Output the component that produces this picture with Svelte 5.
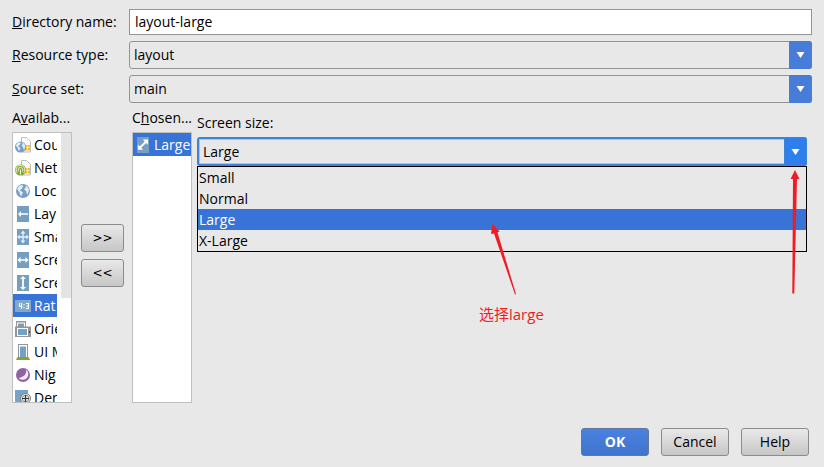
<script>
  const available = [
    { text: 'Cou', icon: 'country' },
    { text: 'Net', icon: 'network' },
    { text: 'Loc', icon: 'locale' },
    { text: 'Lay', icon: 'direction' },
    { text: 'Sma', icon: 'smallest' },
    { text: 'Scre', icon: 'width' },
    { text: 'Scre', icon: 'height' },
    { text: 'Rat', icon: 'ratio' },
    { text: 'Orie', icon: 'orientation' },
    { text: 'UI M', icon: 'mode' },
    { text: 'Nig', icon: 'night' },
    { text: 'Den', icon: 'density' }
  ];
  const sizes = ['Small', 'Normal', 'Large', 'X-Large'];
  let directory = $state('layout-large');
  let picked = $state('ratio');
  let size = $state('Large');
</script>

{#snippet globe(cx, cy, r)}
  <circle {cx} {cy} {r} fill="#769fc2" />
  <g transform="translate({cx} {cy}) scale({r / 7})" fill="#e4eef6">
    <path d="M-5.8 -2.6 L-3.4 -5.6 L-.4 -5.8 L.4 -4.6 L-1 -3.6 L-.6 -2.4 L-2.4 -1.6 L-2.8 0 L-1 .4 L0 1.8 L-1.2 3.4 L-1.6 5.4 L-3 3.6 L-3.4 1.4 L-5 -.4 Z" />
    <path d="M2.2 -5.6 L4.8 -4 L6 -1.4 L5.6 1 L4.4 3.4 L3.4 1.6 L3.2 -.2 L1.6 -.8 L1.4 -2.4 L3 -3.4 Z" />
  </g>
{/snippet}

{#snippet sim()}
  <path d="M6.5.5h5l4 4v10.500h-9z" fill="#fafafa" stroke="#bdbdbd" />
  <path d="M10 8h5v5.500h-5z" fill="#f3bd20" />
  <path d="M10 10.500h5M12.500 8v5.500" stroke="#fff3b8" stroke-width=".8" />
{/snippet}

{#snippet icon(name)}
  <svg class="icon" viewBox="0 0 16 16" aria-hidden="true">
    {#if name === 'country'}
      {@render sim()}
      {@render globe(5.5, 10, 5.5)}
    {:else if name === 'network'}
      {@render sim()}
      <circle cx="5.500" cy="10" r="5.500" fill="#83a629" />
      <path d="M5.500 9.500v5M3.800 11.600a2.400 2.400 0 1 1 3.400 0M2.400 13a4.400 4.400 0 1 1 6.200 0" fill="none" stroke="#f4f8e6" stroke-width="1" />
    {:else if name === 'locale'}
      {@render globe(8, 8, 7)}
    {:else if name === 'ratio'}
      <path d="M0 2h16v12H0z" fill="#7fa9cc" />
      <path d="M4.500 5v3.500h3M6.500 5v6M11 5.500h2.500v5H11M11.500 8h2" fill="none" stroke="#fff" stroke-width="1.100" />
      <path d="M8.500 6h1v1.200h-1zM8.500 9h1v1.200h-1z" fill="#fff" />
    {:else if name === 'orientation'}
      <path d="M1 0h10v6H1z" fill="#969696" />
      <path d="M2 1.500h8V6H2z" fill="#fff" />
      <path d="M3 2.500h6V6H3z" fill="#73a2c8" />
      <path d="M0 5.500h16V16H0z" fill="#969696" />
      <path d="M2 7h11v8H2z" fill="#fff" />
      <path d="M3 8h9v6H3z" fill="#73a2c8" />
      <path d="M14 10h1v2h-1z" fill="#444" />
    {:else if name === 'mode'}
      <path d="M3 0h10v14H3z" fill="#969696" />
      <path d="M4 1h8v12H4z" fill="#fff" />
      <path d="M5 2.500h6V13H5z" fill="#73a2c8" />
      <path d="M2.500 13h11l1.500 3H1z" fill="#83a629" />
    {:else if name === 'night'}
      <circle cx="8" cy="8" r="7" fill="#8e64a6" />
      <path d="M11.300 2.600C11.600 7.500 8.500 10.600 3.400 11C7 14.200 12.200 12.800 13.200 8.600C13.700 6.300 12.800 4 11.300 2.600z" fill="#f4edf8" />
    {:else if name === 'density'}
      <path d="M0 0h13v16H0z" fill="#76a3c8" />
      <circle cx="10.500" cy="8.500" r="5" fill="#eee" stroke="#777" />
      <circle cx="10.500" cy="8.500" r="3.300" fill="none" stroke="#666" stroke-width=".7" />
      <path d="M7 8.500h7M10.500 5v7" stroke="#333" stroke-width="1.200" />
    {:else}
      <path d="M2 0h12v16H2z" fill="#759fc2" />
      {#if name === 'direction'}
        <path d="M3 8l3-3v2.200H13v1.600H6V11z" fill="#fff" />
      {:else if name === 'width'}
        <path d="M2.500 8l3-3v2.200h5V5l3 3-3 3V8.800h-5V11z" fill="#fff" />
      {:else if name === 'height'}
        <path d="M8 1l3 3H8.900v8H11l-3 3-3-3h2.100V4H5z" fill="#fff" />
      {:else if name === 'smallest'}
        <path d="M8 1.500l2.500 3H8.700v2.800h2.600V5.500L13.800 8l-2.500 2.500V8.700H8.700v2.800h1.800L8 14.500l-2.500-3h1.800V8.700H4.700v1.800L2.200 8l2.500-2.500v1.800h2.600V4.500H5.500z" fill="#e6eff6" />
      {:else}
        <path d="M13 2.500v5.300l-1.900-1.900-4.900 4.900L8.100 12.700H2.900V7.500L4.800 9.400l4.900-4.900-2-2z" fill="#fff" />
      {/if}
    {/if}
  </svg>
{/snippet}

{#snippet arrow()}
  <span class="arrow" aria-hidden="true">
    <svg viewBox="0 0 9 6"><path d="M.5 0h8L4.500 6z" fill="#fff" /></svg>
  </span>
{/snippet}

<main class="dialog">
  <form class="fields" onsubmit={(e) => e.preventDefault()}>
    <label for="directory"><u>D</u>irectory name:</label>
    <input id="directory" type="text" bind:value={directory} />
    <label for="type"><u>R</u>esource type:</label>
    <div class="combo">
      <select id="type"><option>layout</option></select>
      {@render arrow()}
    </div>
    <label for="source"><u>S</u>ource set:</label>
    <div class="combo">
      <select id="source"><option>main</option></select>
      {@render arrow()}
    </div>
  </form>

  <section class="qualifiers">
    <div class="column">
      <span class="heading" id="available">A<u>v</u>ailab...</span>
      <ul class="list" role="listbox" aria-labelledby="available">
        {#each available as item}
          <li role="option" aria-selected={picked === item.icon} class:selected={picked === item.icon}>
            <button type="button" class="item" onclick={() => (picked = item.icon)}>
              {@render icon(item.icon)}<span>{item.text}</span>
            </button>
          </li>
        {/each}
        <li class="track" role="presentation"></li>
      </ul>
    </div>
    <div class="movers">
      <button type="button" class="push">&gt;&gt;</button>
      <button type="button" class="push">&lt;&lt;</button>
    </div>
    <div class="column">
      <span class="heading" id="chosen">C<u>h</u>osen...</span>
      <ul class="list chosen" role="listbox" aria-labelledby="chosen">
        <li class="selected" role="option" aria-selected="true">
          <button type="button" class="item">{@render icon('size')}<span>{size}</span></button>
        </li>
      </ul>
    </div>
    <div class="detail">
      <label for="size">Screen size:</label>
      <div class="combo focused">
        <select id="size" bind:value={size}>
          {#each sizes as s}<option>{s}</option>{/each}
        </select>
        {@render arrow()}
        <ul class="popup" role="listbox" aria-label="Screen size">
          {#each sizes as s}
            <li role="option" aria-selected={size === s} class:selected={size === s}>
              <button type="button" class="choice" onclick={() => (size = s)}>{s}</button>
            </li>
          {/each}
        </ul>
      </div>
    </div>
  </section>

  <footer>
    <button type="button" class="push primary">OK</button>
    <button type="button" class="push">Cancel</button>
    <button type="button" class="push">Help</button>
  </footer>

  <svg class="pointer pick" viewBox="0 0 28 74" aria-hidden="true">
    <path d="M2.500 0L9.500 7.500 7.500 8.500 26 70 25 70.500 4 9.500 1 10z" fill="#ee1c24" />
  </svg>
  <svg class="pointer open" viewBox="0 0 12 126" aria-hidden="true">
    <path d="M6 0L10.500 9H8L5.300 123.500H3.300L4 9H1.500z" fill="#ee1c24" />
  </svg>
  <span class="note">选择large</span>
</main>

<style>
  :global(body) { margin: 0; background: #e8e8e8; }
  .dialog {
    position: relative;
    min-height: 100vh;
    box-sizing: border-box;
    padding-top: 9px;
    background: #e8e8e8;
    color: #000;
    font: 14px/20px "Open Sans", "Noto Sans CJK SC", sans-serif;
  }
  .dialog * { box-sizing: border-box; }
  button, input, select { font: inherit; color: inherit; margin: 0; }
  ul { list-style: none; margin: 0; padding: 0; }
  u { text-underline-offset: 1px; text-decoration-thickness: 1px; text-decoration-skip-ink: none; }

  .fields {
    display: grid;
    grid-template-columns: 117px 1fr;
    row-gap: 6px;
    align-items: center;
    padding: 0 12px;
  }
  .fields input {
    width: 100%;
    height: 26px;
    padding: 0 5px 2px;
    border: 1px solid #949494;
    background: #fff;
    outline: none;
  }
  .combo { position: relative; height: 28px; }
  .combo select {
    display: block;
    width: 100%;
    height: 100%;
    padding: 0 28px 0 4px;
    appearance: none;
    border: 1px solid #949494;
    border-radius: 3px;
    background: #e8e8e8;
    outline: none;
  }
  .arrow {
    position: absolute;
    inset: 0 0 0 auto;
    width: 23px;
    display: flex;
    align-items: center;
    justify-content: center;
    background: #477cd8;
    border-radius: 0 3px 3px 0;
    pointer-events: none;
  }
  .arrow svg { width: 9px; height: 6px; }

  .qualifiers { display: flex; padding: 5px 17px 0 12px; }
  .column { width: 60px; }
  .heading { display: block; height: 24px; white-space: nowrap; }
  .list {
    position: relative;
    height: 271px;
    overflow: hidden;
    border: 1px solid #bfbfbf;
    background: #fff;
    padding-right: 14px;
  }
  .list.chosen { padding-right: 0; }
  .list li { overflow: hidden; }
  .item {
    display: flex;
    align-items: center;
    gap: 3px;
    width: 100%;
    height: 23px;
    padding: 0 0 0 2px;
    border: 0;
    background: none;
    white-space: nowrap;
  }
  .icon { flex: none; width: 16px; height: 16px; }
  .selected { background: #3874d8; color: #fff; }
  .list .track {
    position: absolute;
    top: 0;
    right: 0;
    width: 10px;
    height: 165px;
    background: #e4e4e4;
  }
  .movers {
    display: flex;
    flex-direction: column;
    gap: 7px;
    width: 43px;
    margin: 116px 8px 0 9px;
  }
  .push {
    height: 28px;
    padding: 0;
    border: 1px solid #8c8c8c;
    border-radius: 3px;
    background: linear-gradient(#e9e9e9, #c6c6c6);
  }
  .movers .push { font-family: "DejaVu Sans", sans-serif; font-size: 12px; }
  .detail { flex: 1; min-width: 0; padding-top: 5px; margin-left: 5px; }
  .detail label { display: block; height: 24px; }
  .focused { height: 29px; }
  .focused select {
    border: 2px solid #3d84d8;
    box-shadow: inset 0 0 0 1px #a9c6ea;
    padding-left: 4px;
  }
  .focused .arrow { background: #2d80ec; border: 1px solid #3d84d8; }
  .popup {
    position: absolute;
    top: 29px;
    left: 0;
    right: 0;
    border: 1px solid #000;
    background: #e8e8e8;
  }
  .choice {
    display: block;
    width: 100%;
    height: 21px;
    padding: 0 1px;
    border: 0;
    background: none;
    text-align: left;
  }
  footer { display: flex; justify-content: flex-end; gap: 12px; padding: 25px 15px 11px; }
  footer .push { width: 68px; }
  .primary {
    border-color: #64779c;
    background: linear-gradient(#4a82e0, #3f74cc);
    color: #fff;
    font-weight: 700;
  }
  .pointer { position: absolute; pointer-events: none; }
  .pick { left: 490px; top: 224px; width: 28px; height: 74px; }
  .open { right: 23px; top: 170px; width: 12px; height: 126px; }
  .note { position: absolute; left: 479px; top: 304px; color: #ee1c24; font-size: 15px; }
</style>
